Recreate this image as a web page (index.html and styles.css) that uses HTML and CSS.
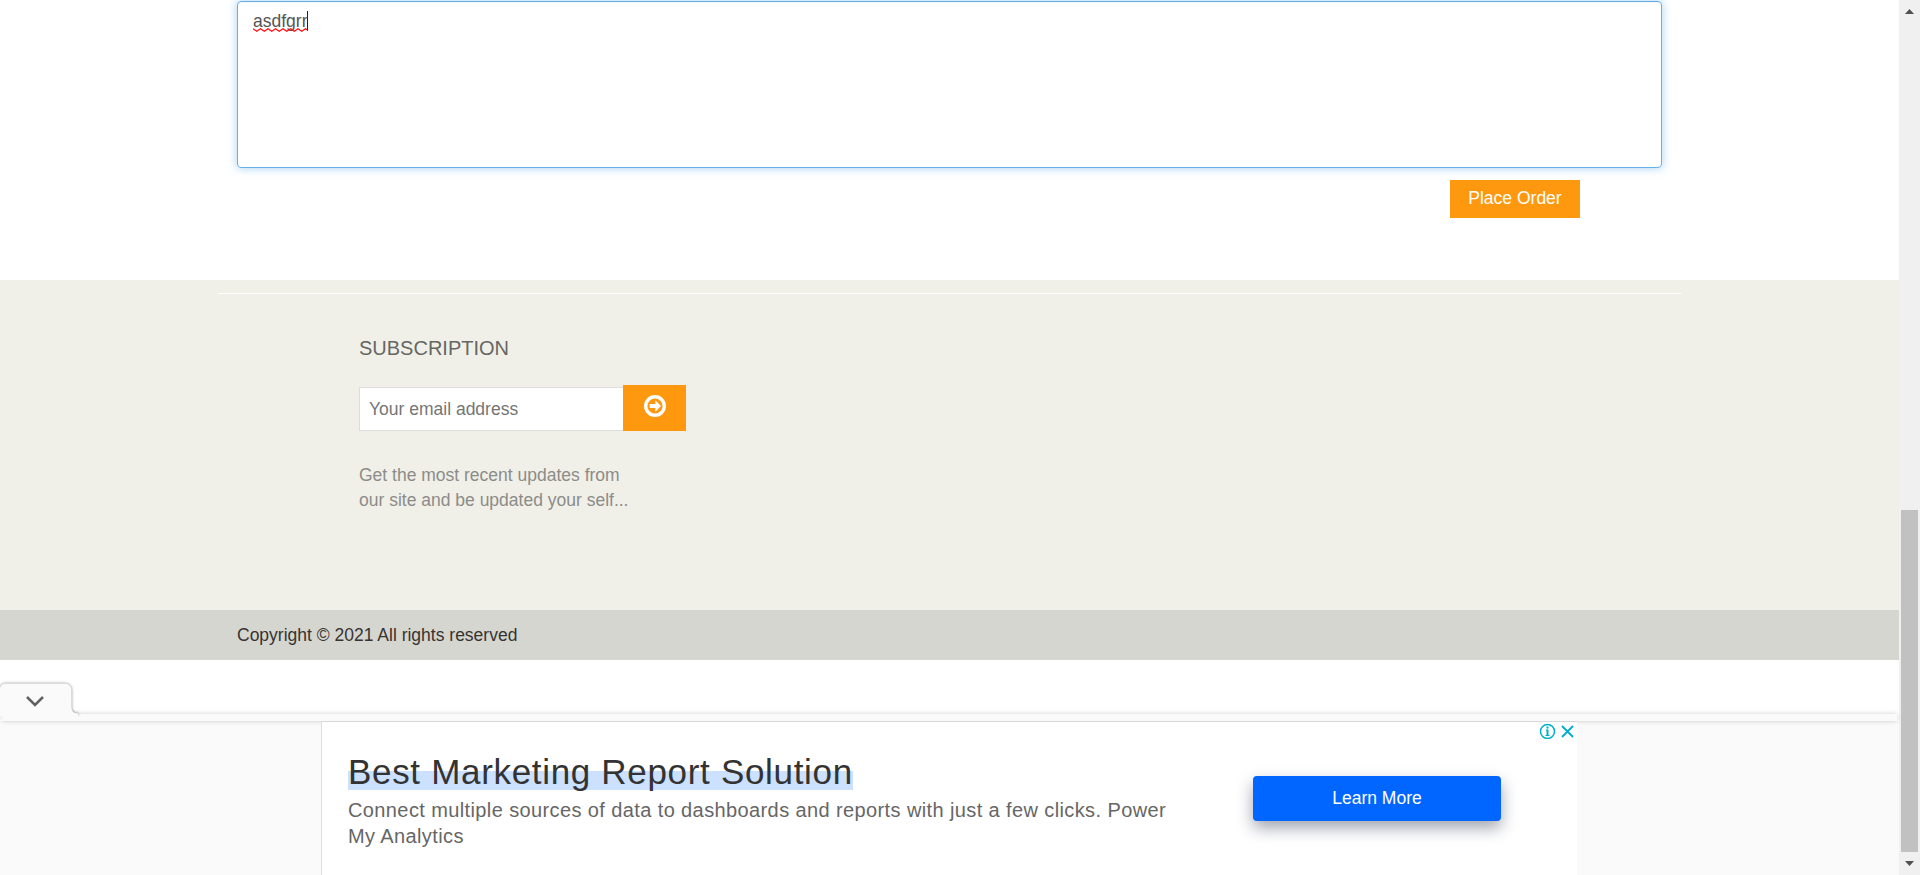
FILE: index.html
```html
<!DOCTYPE html>
<html lang="en">
<head>
<meta charset="utf-8">
<title>Checkout</title>
<link rel="stylesheet" href="styles.css">
</head>
<body>
<div class="page">
  <section class="order">
    <div class="note"><span class="note-text">asdfgrr<svg class="squiggle" width="55" height="4" viewBox="0 0 55 4"><path d="M0 .7 3.75 3.3 7.5 .7 11.25 3.3 15 .7 18.75 3.3 22.5 .7 26.25 3.3 30 .7 33.75 3.3 37.5 .7 41.25 3.3 45 .7 48.75 3.3 52.5 .7 55 2.6"/></svg></span><i class="caret"></i></div>
    <button class="place">Place Order</button>
  </section>
  <footer class="footer">
    <div class="rule"></div>
    <div class="subscribe">
      <h2 class="heading">SUBSCRIPTION</h2>
      <div class="field">
        <input class="email" type="text" placeholder="Your email address">
        <button class="go" aria-label="Subscribe"><svg width="22" height="22" viewBox="0 0 22 22"><circle cx="11" cy="11" r="9.3"/><path d="M5.7 8.9h5.6V5.2L17 11l-5.7 5.8v-3.7H5.7z"/></svg></button>
      </div>
      <p class="blurb">Get the most recent updates from<br>our site and be updated your self...</p>
    </div>
  </footer>
  <div class="copyright"><span class="copy-text">Copyright © 2021 All rights reserved</span></div>
  <div class="dock">
    <svg class="tab" width="84" height="37" viewBox="0 0 84 37">
      <path class="tab-shape" d="M0 37V9Q1 4.500 6 4.500H64Q71.500 4.500 71.500 12V28Q71.500 34.500 78 34.500V37z"/>
      <path class="chevron" d="M27 18l8 8 8-8"/>
    </svg>
    <div class="strip"></div>
    <div class="ad-row">
      <div class="ad">
        <div class="ad-copy">
          <div class="ad-title"><span class="mark">Best Marketing Report Solution</span></div>
          <p class="ad-text">Connect multiple sources of data to dashboards and reports with just a few clicks. Power<br>My Analytics</p>
        </div>
        <button class="learn">Learn More</button>
        <svg class="choices" width="36" height="16" viewBox="0 0 36 16"><circle cx="8.500" cy="8.500" r="7"/><path d="M7 7h1.500v5.500M6.500 12.500h4" class="thin"/><path d="M8.500 6.500v6" class="thick"/><path d="M8.500 3.500v2" class="thick"/><path d="M23 3l11 11M34 3l-11 11" class="cross"/></svg>
      </div>
    </div>
  </div>
</div>
<div class="scrollbar">
  <svg class="arrow" width="9" height="5" viewBox="0 0 9 5"><path d="M0 5h9L4.500 0z"/></svg>
  <div class="thumb"></div>
  <svg class="arrow" width="9" height="5" viewBox="0 0 9 5"><path d="M0 0h9L4.500 5z"/></svg>
</div>
</body>
</html>
```
FILE: styles.css
```css
* { box-sizing: border-box; }
body {
  margin: 0;
  height: 875px;
  display: flex;
  overflow: hidden;
  background: #fff;
  color: #555;
  font: 17.5px/25px "Liberation Sans", Arial, sans-serif;
}
button { border: 0; padding: 0; border-radius: 0; font: inherit; color: #fff; }
h2, p { margin: 0; font-weight: 400; }
svg { display: block; }
.page { width: 1899px; height: 875px; display: flex; flex-direction: column; }
.order { height: 280px; padding: 1px 237px 0; display: flex; flex-direction: column; }
.note {
  display: flex;
  height: 167px;
  padding: 7px 15px;
  border: 1px solid #66afe9;
  border-radius: 4px;
  box-shadow: 0 1px 1px rgba(0,0,0,.04) inset, 0 0 10px rgba(102,175,233,.6);
}
.note-text { position: relative; }
.squiggle { position: absolute; left: 0; top: 19px; fill: none; stroke: #f11; stroke-width: 1.2; }
.caret { width: 1px; height: 20px; margin-top: 2px; background: #222; }
.place { align-self: flex-end; width: 130px; height: 38px; margin: 12px 82px 0 0; padding-bottom: 2px; background: #fe980f; }
.footer { height: 330px; background: #f0f0e9; padding: 13px 218px 0; }
.rule { height: 1px; background: #fff; }
.subscribe { padding: 42px 0 0 141px; }
.heading { height: 25px; font-size: 20px; line-height: 25px; color: #666663; }
.field { display: flex; align-items: flex-end; height: 46px; margin-top: 24px; }
.email { width: 264px; height: 44px; padding: 0 9px; border: 1px solid #ddd; border-right: 0; border-radius: 0; background: #fff; font: inherit; outline: 0; }
.email::placeholder { color: #757575; opacity: 1; }
.go { width: 63px; height: 46px; padding: 0 0 4px; display: flex; align-items: center; justify-content: center; background: #fe980f; }
.go circle { fill: none; stroke: #fff; stroke-width: 3.400; }
.go path { fill: #fff; }
.blurb { margin-top: 32px; color: #8c8c88; }
.copyright { height: 50px; padding: 13px 237px 0; background: #d6d6d0; color: #363432; }
.dock { flex: 1; display: flex; flex-direction: column; position: relative; padding-top: 54px; }
.tab { position: absolute; left: 0; top: 19px; z-index: 2; }
.tab-shape { fill: #fafafa; filter: drop-shadow(0 0 1.500px rgba(0,0,0,.5)); }
.chevron { fill: none; stroke: #616161; stroke-width: 2.500; }
.strip { height: 7px; background: #fafafa; box-shadow: 0 0 5px rgba(0,0,0,.2); margin: 0 2px; z-index: 1; }
.ad-row { height: 154px; background: #fafafa; padding-left: 321px; }
.ad { width: 1256px; height: 154px; position: relative; display: flex; border-left: 1px solid #dcdee0; background: #fff; z-index: 1; border-top: 1px solid #d5d7d9; }
.ad-copy { width: 931px; padding: 29px 0 0 26px; white-space: nowrap; }
.ad-title { height: 46px; font-size: 35px; line-height: 42px; letter-spacing: .68px; color: #333; }
.mark { display: inline-block; height: 39px; line-height: 42px; background: linear-gradient(transparent 20px, #cce0ff 20px); }
.ad-text { font-size: 20px; line-height: 26px; letter-spacing: .39px; color: #666; }
.learn { width: 248px; height: 45px; margin-top: 54px; border-radius: 4px; background: #06f; box-shadow: 0 7px 16px rgba(20,30,60,.4); }
.choices { position: absolute; right: 2px; top: 1px; fill: none; stroke: #00aecd; stroke-width: 1.500; }
.thick { stroke-width: 2; }
.thin { stroke-width: 1; }
.cross { stroke-width: 1.800; }
.scrollbar { width: 21px; height: 875px; display: flex; flex-direction: column; align-items: center; padding: 9px 0; background: #f0f0f0; }
.arrow { fill: #505050; }
.thumb { width: 17px; height: 342px; margin: 496px 0 9px; background: #c1c1c1; }
```
